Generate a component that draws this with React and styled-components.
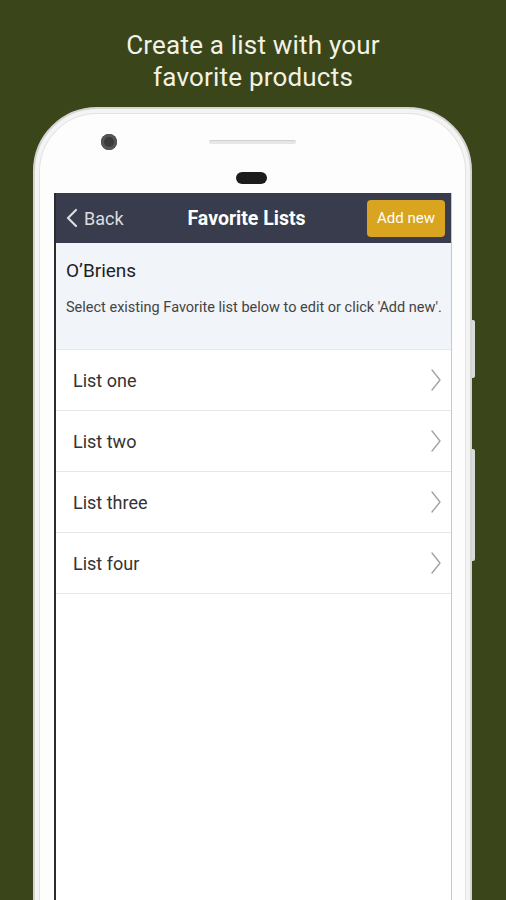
import React from 'react'
import styled, { createGlobalStyle } from 'styled-components'

const GlobalStyle = createGlobalStyle`
    html, body {
        margin: 0;
        padding: 0;
        background: #3a4519;
        font-family: Roboto, "Liberation Sans", sans-serif;
    }
`

const Page = styled.div`
    width: 506px;
    height: 900px;
    overflow: hidden;
    background: #3a4519;
    display: flex;
    flex-direction: column;
`

const Headline = styled.h1`
    margin: 29px 0 0;
    height: 78px;
    flex-shrink: 0;
    text-align: center;
    color: #f2f2e4;
    font-size: 26px;
    font-weight: 400;
    line-height: 32px;
    letter-spacing: 0.2px;
`

const Phone = styled.div`
    position: relative;
    margin-left: 33px;
    width: 439px;
    height: 860px;
    flex-shrink: 0;
    box-sizing: border-box;
    background: #fdfdfd;
    border: 2px solid #d4d4d4;
    border-radius: 64px 64px 0 0;
    box-shadow: inset 0 0 0 4px #f4f4f4, inset 0 0 0 5px #e2e2e2;
    padding: 0 18px 0 19px;
    display: flex;
    flex-direction: column;
`

const SideButton = styled.div`
    position: absolute;
    right: -5px;
    top: ${p => p.top}px;
    width: 3px;
    height: ${p => p.h}px;
    background: #dadada;
    border-radius: 0 2px 2px 0;
`

const Bezel = styled.div`
    height: 84px;
    flex-shrink: 0;
    position: relative;
`

const Camera = styled.div`
    position: absolute;
    left: 47px;
    top: 25px;
    width: 16px;
    height: 16px;
    border-radius: 50%;
    background: #3a3a3a;
    box-shadow: inset 0 0 0 3px #555;
`

const Speaker = styled.div`
    position: absolute;
    left: 155px;
    top: 31px;
    width: 87px;
    height: 3px;
    border-radius: 2px;
    background: #e6e6e6;
    border-top: 1px solid #d0d0d0;
`

const Sensor = styled.div`
    position: absolute;
    left: 182px;
    top: 63px;
    width: 31px;
    height: 12px;
    border-radius: 6px;
    background: #1c1c1c;
`

const Screen = styled.div`
    flex: 1;
    background: #fff;
    border-left: 2px solid #2c2c2c;
    border-right: 1px solid #c8c8c8;
    display: flex;
    flex-direction: column;
`

const Header = styled.div`
    height: 50px;
    background: #383c4c;
    display: grid;
    grid-template-columns: 1fr auto 1fr;
    align-items: center;
    padding: 0 6px 0 10px;
`

const BackLink = styled.div`
    display: flex;
    align-items: center;
    gap: 6px;
    color: #dcdde2;
    font-size: 18px;
`

const HeaderTitle = styled.div`
    color: #fff;
    font-size: 19.5px;
    font-weight: 700;
    padding-right: 18px;
`

const AddButton = styled.div`
    justify-self: end;
    width: 78px;
    height: 37px;
    border-radius: 4px;
    background: #d9a420;
    color: #fff;
    font-size: 15px;
    display: flex;
    align-items: center;
    justify-content: center;
`

const Info = styled.div`
    background: #f1f4f8;
    height: 106px;
    padding: 0 10px;
    border-bottom: 1px solid #e6e8ec;
    display: flex;
    flex-direction: column;
`

const StoreName = styled.div`
    margin-top: 16px;
    font-size: 19px;
    color: #1e1e1e;
`

const Hint = styled.div`
    margin-top: 17px;
    font-size: 14.5px;
    color: #444;
    white-space: nowrap;
`

const Row = styled.div`
    height: 60px;
    border-bottom: 1px solid #e6e6e6;
    display: flex;
    align-items: center;
    justify-content: space-between;
    padding: 0 10px 0 17px;
    font-size: 18px;
    color: #333;
`

const Chevron = ({ color = '#a0a0a0', w = 8, h = 20, sw = 1.3 }) => (
    <svg width={w + 2} height={h + 2} viewBox={`0 0 ${w + 2} ${h + 2}`} fill="none">
        <path d={`M1 1 L${w + 1} ${h / 2 + 1} L1 ${h + 1}`} stroke={color} strokeWidth={sw} strokeLinecap="round" strokeLinejoin="round" />
    </svg>
)

const BackChevron = () => (
    <svg width="12" height="20" viewBox="0 0 12 20" fill="none">
        <path d="M10 2 L2 10 L10 18" stroke="#dcdde2" strokeWidth="2.2" strokeLinecap="round" strokeLinejoin="round" />
    </svg>
)

const lists = ['List one', 'List two', 'List three', 'List four']

const App = () => {
  return (
    <Page>
        <GlobalStyle/>
        <Headline>Create a list with your<br/>favorite products</Headline>

        <Phone>
            <SideButton top={211} h={58}/>
            <SideButton top={340} h={112}/>

            <Bezel>
                <Camera/>
                <Speaker/>
                <Sensor/>
            </Bezel>

            <Screen>
                <Header>
                    <BackLink>
                        <BackChevron/>
                        Back
                    </BackLink>
                    <HeaderTitle>Favorite Lists</HeaderTitle>
                    <AddButton>Add new</AddButton>
                </Header>

                <Info>
                    <StoreName>O’Briens</StoreName>
                    <Hint>Select existing Favorite list below to edit or click 'Add new'.</Hint>
                </Info>

                {lists.map(name => (
                    <Row key={name}>
                        {name}
                        <Chevron/>
                    </Row>
                ))}
            </Screen>
        </Phone>
    </Page>
  )
}

export default App
